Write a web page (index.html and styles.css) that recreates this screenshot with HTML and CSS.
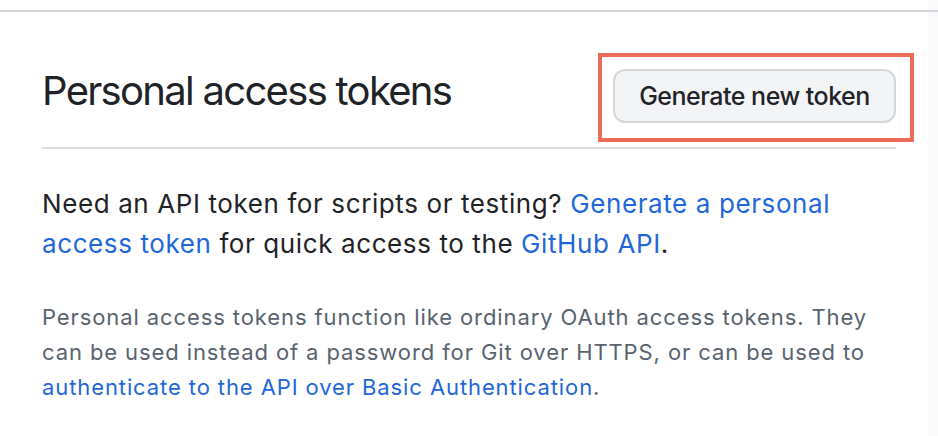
FILE: index.html
```html
<!DOCTYPE html>
<html lang="en">
<head>
<meta charset="utf-8">
<title>Personal access tokens</title>
<link rel="stylesheet" href="styles.css">
</head>
<body>
<div class="page">
  <section class="settings">
    <div class="subhead">
      <h2 class="subhead-heading">Personal access tokens</h2>
      <span class="highlight">
        <button class="btn" type="button">Generate new token</button>
      </span>
    </div>
    <p class="lead">Need an API token for scripts or testing? <a href="#">Generate a personal access token</a> for quick access to the <a href="#">GitHub API</a>.</p>
    <p class="note">Personal access tokens function like ordinary OAuth access tokens. They can be used instead of a password for Git over HTTPS, or can be used to <a href="#">authenticate to the API over Basic Authentication</a>.</p>
  </section>
</div>
</body>
</html>
```
FILE: styles.css
```css
html {
  background: linear-gradient(to right, #ffffff 928px, #fafafa 928px);
}
body {
  margin: 0;
  font-family: Inter, "Liberation Sans", Arial, sans-serif;
  color: #1f2328;
}
.page {
  padding-top: 10px;
}
.settings {
  border-top: 2px solid #d3d8de;
}
.subhead {
  display: flex;
  justify-content: space-between;
  align-items: flex-start;
  margin: 0 42px;
  padding: 57px 0 24px;
  border-bottom: 2px solid #d8dee4;
}
.subhead-heading {
  margin: 0;
  font-size: 40px;
  line-height: 44px;
  font-weight: 400;
  letter-spacing: -1.7px;
}
.highlight {
  position: relative;
  display: inline-block;
}
.highlight::after {
  content: "";
  position: absolute;
  top: -16px;
  left: -15px;
  right: -18px;
  bottom: -19px;
  border: 4px solid #ec6b5b;
  pointer-events: none;
}
.btn {
  display: block;
  width: 283px;
  height: 54px;
  border: 2px solid #d3d7dc;
  border-radius: 12px;
  background: #f3f4f6;
  color: #1f2328;
  font-family: Inter, "Liberation Sans", Arial, sans-serif;
  font-size: 25px;
  font-weight: 500;
  letter-spacing: -0.5px;
  padding: 0;
}
.lead {
  margin: 35px 42px 0;
  font-size: 26px;
  line-height: 40px;
  letter-spacing: 0.6px;
}
.note {
  margin: 36px 42px 0;
  font-size: 22px;
  line-height: 35px;
  letter-spacing: 0.9px;
  color: #59636e;
}
a {
  color: #1f67d8;
  text-decoration: none;
}
```
